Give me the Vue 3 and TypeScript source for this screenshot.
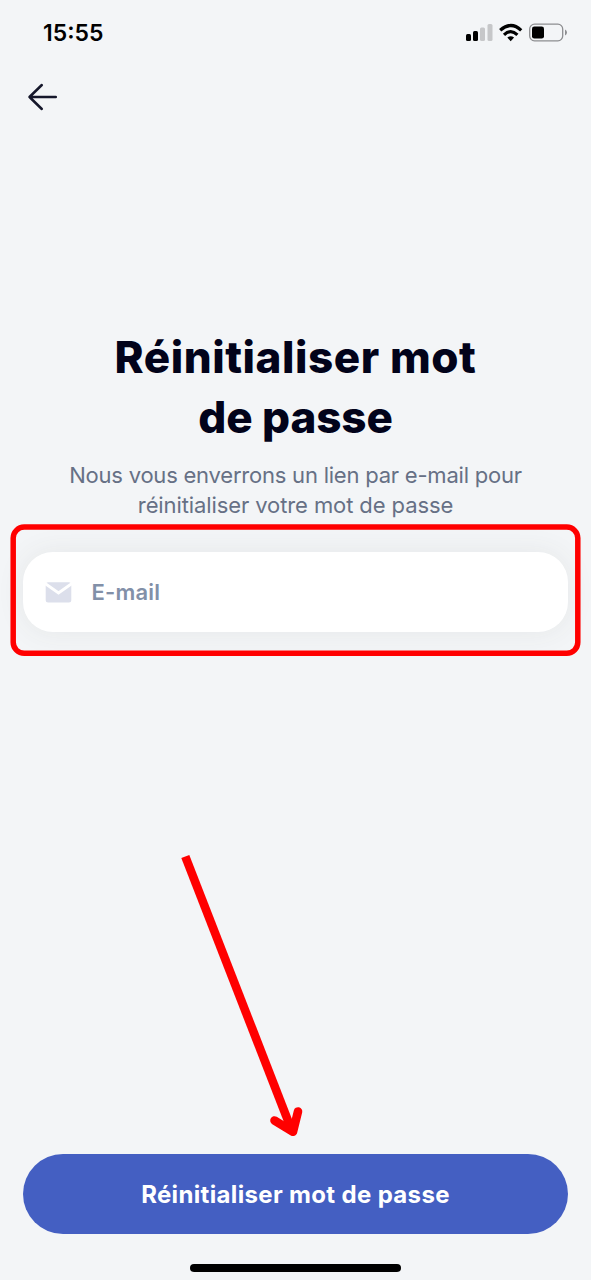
<script setup lang="ts">
import { ref } from 'vue'

const email = ref<string>('')
const titleLines: string[] = ['Réinitialiser mot', 'de passe']
const hintLines: string[] = ['Nous vous enverrons un lien par e-mail pour', 'réinitialiser votre mot de passe']
</script>

<template>
  <main class="screen">
    <header class="status">
      <span class="time">15:55</span>
      <svg class="indicators" width="102" height="20" viewBox="0 0 102 20">
        <rect x="1" y="11" width="5" height="7" rx="1.5" fill="#000" />
        <rect x="8" y="8" width="5" height="10" rx="1.5" fill="#000" />
        <rect x="15" y="4.500" width="5" height="13.500" rx="1.500" fill="#c6c7c9" />
        <rect x="22.500" y="1" width="5" height="17" rx="1.500" fill="#c6c7c9" />
        <g fill="none" stroke="#000" stroke-width="3.200">
          <path d="M35.200 7.300Q46 -2.300 56.200 7.300" />
          <path d="M39 11.800Q45.700 5.500 52.400 11.800" />
        </g>
        <path d="M42.300 14.600Q45.700 11.800 49.100 14.600L45.700 18.200Z" fill="#000" />
        <rect x="64.700" y="1.200" width="33" height="16.600" rx="4.800" fill="none" stroke="#8d8e91" stroke-width="1.300" />
        <rect x="67" y="3.500" width="12" height="12" rx="2.300" fill="#000" />
        <path d="M100 6.500Q102 7.500 102 9.500T100 12.500Z" fill="#8d8e91" />
      </svg>
    </header>

    <nav class="nav">
      <button class="back" type="button" aria-label="Retour">
        <svg width="32" height="30" viewBox="0 0 32 30" fill="none" stroke="#15172b" stroke-width="2.500" stroke-linecap="round" stroke-linejoin="round">
          <path d="M28.800 15H2.500M14.800 3L2.500 15L14.800 27" />
        </svg>
      </button>
    </nav>

    <section class="intro">
      <h1 class="title">
        <span v-for="(line, i) in titleLines" :key="line" :class="['line', `title-${i}`]">{{ line }}</span>
      </h1>
      <p class="hint">
        <span v-for="(line, i) in hintLines" :key="line" :class="['line', `hint-${i}`]">{{ line }}</span>
      </p>
    </section>

    <label class="field">
      <svg width="27" height="21" viewBox="0 0 27 21">
        <rect x="0.700" y="0.200" width="25.600" height="20.300" rx="2.500" fill="#dcdfeb" />
        <path d="M0 1.500L13.500 11L27 1.500" fill="none" stroke="#fff" stroke-width="3" />
      </svg>
      <input v-model="email" type="email" placeholder="E-mail" />
      <svg class="highlight" width="571" height="133" viewBox="0 0 571 133">
        <rect x="3.200" y="3.100" width="564.600" height="126.200" rx="11" fill="none" stroke="#f00" stroke-width="5.500" />
      </svg>
    </label>

    <button class="submit" type="button"><span>Réinitialiser mot de passe</span></button>
    <div class="home"></div>

    <svg class="pointer" width="140" height="300" viewBox="0 0 140 300" fill="none" stroke="#f00" stroke-width="8.600">
      <path d="M15.300 5.500L122 280" />
      <path d="M104.500 269.500L123 280.800L128 260.500" stroke-linecap="round" stroke-linejoin="round" />
    </svg>
  </main>
</template>

<style>
body {
  background: #f3f5f7;
}
</style>

<style scoped>
.screen {
  position: relative;
  box-sizing: border-box;
  width: 591px;
  height: 1280px;
  padding: 0 23px;
  overflow: hidden;
  display: flex;
  flex-direction: column;
  background: #f3f5f7;
  font-family: Inter, 'Liberation Sans', sans-serif;
}
.status {
  height: 66px;
  padding: 0 1px 0 20px;
  display: flex;
  align-items: center;
  justify-content: space-between;
}
.time {
  font-size: 23px;
  font-weight: 600;
  color: #000;
}
.nav {
  height: 261px;
  padding-top: 16px;
  box-sizing: border-box;
}
.back {
  display: block;
  padding: 0;
  margin-left: 4px;
  border: 0;
  background: none;
}
.back svg {
  display: block;
}
.intro {
  height: 225px;
  text-align: center;
}
.title {
  margin: 0;
  font-size: 44px;
  line-height: 60px;
  font-weight: 800;
  color: #02031a;
}
.line {
  display: block;
  white-space: nowrap;
}
.title-0 {
  letter-spacing: 0.550px;
}
.title-1 {
  letter-spacing: -0.100px;
}
.hint {
  margin: 13px 0 0;
  font-size: 22px;
  line-height: 30px;
  font-weight: 400;
  color: #667085;
}
.hint-0 {
  letter-spacing: -0.220px;
}
.hint-1 {
  letter-spacing: -0.100px;
}
.field {
  position: relative;
  height: 80px;
  box-sizing: border-box;
  padding-left: 22px;
  display: flex;
  align-items: center;
  gap: 19.500px;
  border-radius: 30px;
  background: #fff;
  box-shadow: 0 0 28px rgba(80, 80, 70, 0.080);
}
.field input {
  min-width: 0;
  flex: 1;
  padding: 0;
  border: 0;
  outline: 0;
  background: none;
  font: 600 22px/30px Inter, 'Liberation Sans', sans-serif;
  letter-spacing: 0.200px;
}
.field input::placeholder {
  color: #8290a8;
  opacity: 1;
}
.highlight {
  position: absolute;
  left: -13px;
  top: -28px;
  pointer-events: none;
}
.submit {
  height: 80px;
  margin-top: 522px;
  padding: 2px 0 0;
  border: 0;
  border-radius: 40px;
  background: #445fc2;
  color: #fff;
  font: 700 24px/30px Inter, 'Liberation Sans', sans-serif;
  letter-spacing: 0.340px;
}
.home {
  width: 211px;
  height: 8px;
  margin: 30px auto 0;
  border-radius: 4px;
  background: #000;
}
.pointer {
  position: absolute;
  left: 170px;
  top: 851px;
}
</style>
